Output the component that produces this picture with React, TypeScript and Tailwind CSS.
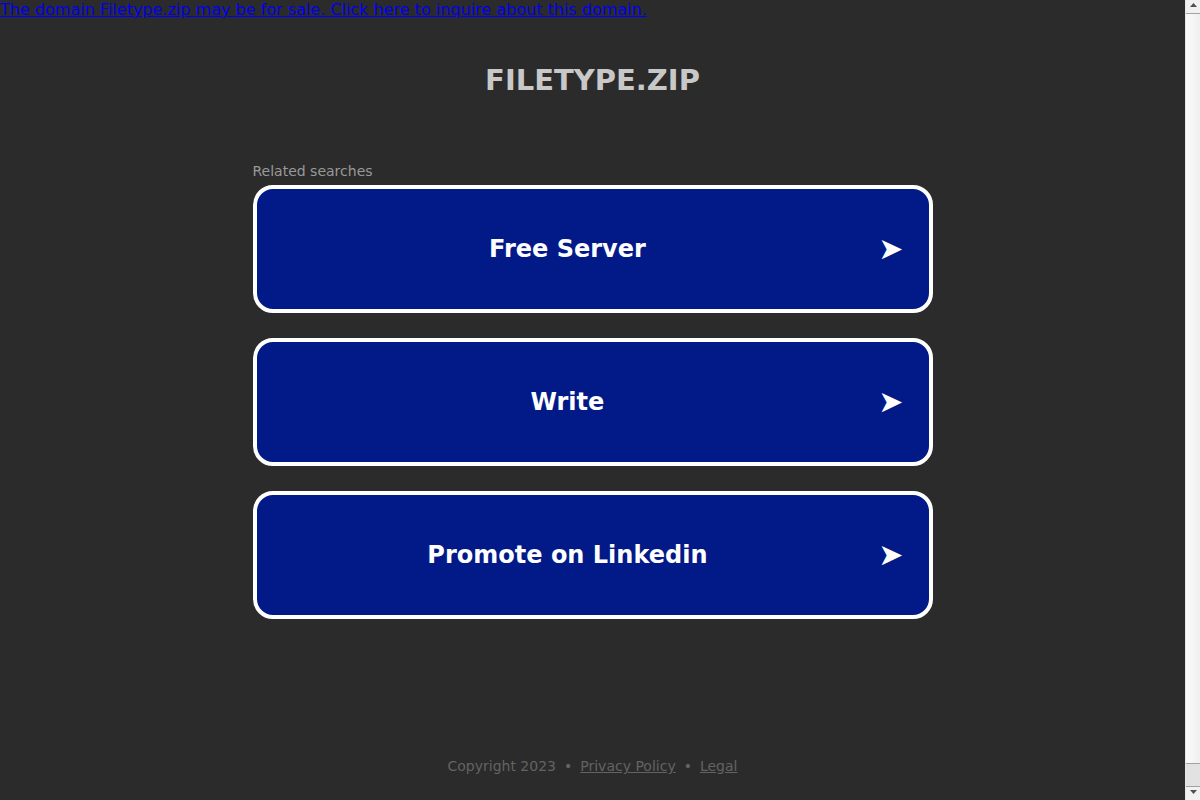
const SEARCHES = ["Free Server", "Write", "Promote on Linkedin"]

function ScrollArrow({ down = false }: { down?: boolean }) {
  return (
    <svg width="7" height="4" viewBox="0 0 7 4" className="mx-auto">
      <path d={down ? "M0 0H7L3.5 4Z" : "M0 4H7L3.5 0Z"} fill="#505050" />
    </svg>
  )
}

export default function App() {
  return (
    <div className="h-[800px] flex bg-[#2b2b2b] font-['DejaVu_Sans',sans-serif] overflow-hidden">
      <div className="flex-1 flex flex-col">
        {/* Sale banner */}
        <a href="#" className="block text-[16px] leading-[19px] text-[#0000ee] underline">
          The domain Filetype.zip may be for sale. Click here to inquire about this domain.
        </a>

        {/* Domain title */}
        <h1 className="mt-[44px] text-center text-[29px] leading-[34px] font-bold text-[#c8c8c8]">
          FILETYPE.ZIP
        </h1>

        {/* Related searches */}
        <div className="mx-auto w-[680px] mt-[66px]">
          <p className="text-[14px] leading-[17px] text-[#999999]">Related searches</p>
          <div className="mt-[5px] flex flex-col gap-[25px]">
            {SEARCHES.map(s => (
              <a
                key={s}
                href="#"
                className="flex items-center h-[128px] rounded-[20px] border-[4px] border-white bg-[#021a87] text-white"
              >
                <span className="flex-1 text-center text-[24px] font-bold">{s}</span>
                <span className="mr-[25px] text-[30px] leading-none">➤</span>
              </a>
            ))}
          </div>
        </div>

        {/* Footer */}
        <footer className="mt-[139px] text-center text-[14px] leading-[17px] text-[#636363]">
          Copyright 2023
          <span className="mx-[8px]">•</span>
          <a href="#" className="underline">Privacy Policy</a>
          <span className="mx-[8px]">•</span>
          <a href="#" className="underline">Legal</a>
        </footer>
      </div>

      {/* Page scrollbar */}
      <div className="w-[15px] shrink-0 flex flex-col border-l border-[#e6e6e6] bg-[#f1f1f1]">
        <div className="h-[14px] flex items-start pt-[3px] bg-[#f1f1f1] border-b border-[#a3a3a3]">
          <ScrollArrow />
        </div>
        <div className="flex-1 bg-gradient-to-r from-[#fbfbfb] to-[#efefef]" />
        <div className="h-[24px] bg-[#e2e2e2] border-y border-[#a3a3a3]" />
        <div className="h-[13px] flex items-start pt-[3px] bg-[#f1f1f1]">
          <ScrollArrow down />
        </div>
      </div>
    </div>
  )
}
